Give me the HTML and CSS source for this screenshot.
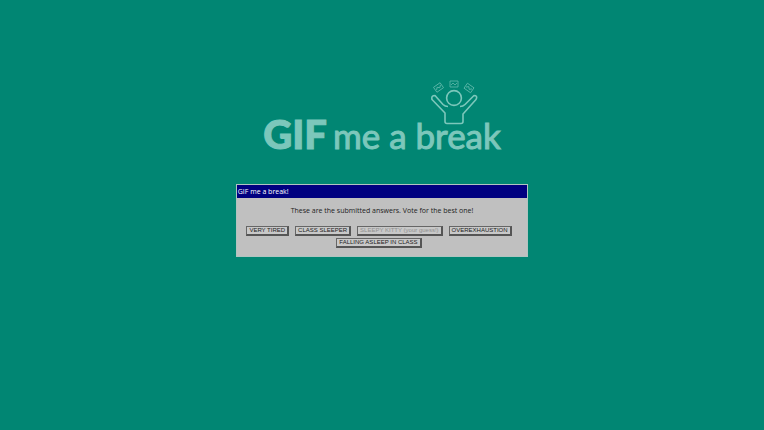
FILE: index.html
```html
<!DOCTYPE html>
<html lang="en">
	<head>
		<meta charset="utf-8">
		<title>GIF me a break</title>
		<link rel="stylesheet" href="styles.css">
	</head>
	<body>

		<h1 class="logo">
			<b>GIF</b>
			<span>me a break</span>
			<!-- juggler -->
			<svg class="juggler" viewBox="0 0 48 46" aria-hidden="true">
				<circle cx="23" cy="18" r="7.4" />
				<path d="M16 43.5 H30 Q32 43.5 32 41.5 V34 L45 19.5 Q47 15.5 43 15.5 L34 24.5 Q32 26.5 29 26.5 M17 26.5 Q14 26.5 12 24.5 L4 15.5 Q0 15.5 1 19.5 L14 33 V41.5 Q14 43.5 16 43.5" />
				<g class="gifs">
					<g transform="translate(7.5 7.5) rotate(-35)"><rect x="-4" y="-3" width="8" height="6" /><path d="M-3 1 l2 -2 l2 2 l2 -2" /></g>
					<g transform="translate(23 4)"><rect x="-4" y="-3" width="8" height="6" /><path d="M-3 1 l2 -2 l2 2 l2 -2" /></g>
					<g transform="translate(38 8) rotate(35)"><rect x="-4" y="-3" width="8" height="6" /><path d="M-3 1 l2 -2 l2 2 l2 -2" /></g>
				</g>
			</svg>
		</h1>

		<div class="window">
			<div class="titleBar">GIF me a break!</div>
			<div class="content">
				<p>These are the submitted answers. Vote for the best one!</p>
				<form class="answers" onsubmit="return false;">
					<button>VERY TIRED</button>
					<button>CLASS SLEEPER</button>
					<button disabled>SLEEPY KITTY (your guess!)</button>
					<button>OVEREXHAUSTION</button>
					<button>FALLING ASLEEP IN CLASS</button>
				</form>
			</div>
		</div>

	</body>
</html>
```

FILE: styles.css
```css
body {
	margin: 0;
	padding-top: 110px;
	display: flex;
	flex-direction: column;
	align-items: center;
	background-color: #018673;
	font-family: "Open Sans", sans-serif;
}

.logo {
	position: relative;
	display: flex;
	align-items: baseline;
	gap: 6px;
	margin: 0 0 25px;
	color: #7cc7bb;
	font-family: Lato, sans-serif;
	font-size: 35px;
	font-weight: 400;
	line-height: 48px;
	-webkit-text-stroke: 1px #7cc7bb;
}

.logo b {
	font-size: 40px;
	font-weight: 900;
	-webkit-text-stroke: 1px #7cc7bb;
}

.juggler {
	position: absolute;
	top: -30px;
	right: 22px;
	width: 48px;
	height: 46px;
	fill: none;
	stroke: #7cc7bb;
	stroke-width: 1.6;
	stroke-linejoin: round;
}

.gifs {
	stroke-width: 0.8;
	opacity: 0.8;
}

.window {
	box-sizing: border-box;
	width: 38.3%;
	min-width: 292px;
	border: 1px solid #b0c4c0;
	background-color: #c0c0c0;
}

.titleBar {
	padding: 0 1px;
	background-color: #000080;
	color: white;
	font-size: 7px;
	font-weight: 500;
	line-height: 13px;
}

.content {
	padding: 8px 6px;
	color: #222;
	text-align: center;
}

.content p {
	margin: 0 0 10px;
	font-size: 7px;
	line-height: 10px;
}

.answers {
	display: flex;
	flex-wrap: wrap;
	justify-content: center;
	row-gap: 2px;
}

.answers button {
	margin: 0 6px 0 0;
	padding: 0 2px;
	border: 1px solid #666;
	border-right: 2px solid #555;
	border-bottom: 2px solid #555;
	background-color: #c8c8c8;
	color: #222;
	font-family: "Liberation Sans", Arial, sans-serif;
	font-size: 6px;
	line-height: 7px;
}

.answers button:disabled {
	color: #909090;
}
```
